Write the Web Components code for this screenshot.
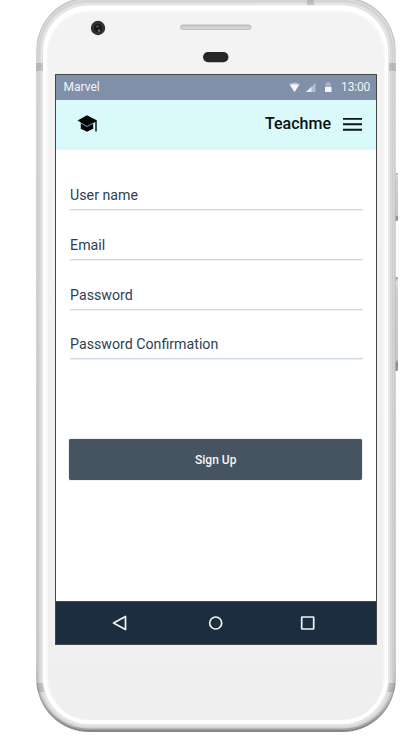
<!DOCTYPE html>
<html lang="en"><head><meta charset="utf-8"><title>Teachme</title>
<style>html,body{margin:0;background:#fff;overflow:hidden}body{font-family:Roboto,sans-serif;width:417px;height:738px}</style></head>
<body>
<sign-up-page></sign-up-page>
<script>
const define = (name, html) => customElements.define(name, class extends HTMLElement {
  constructor() {
    super();
    const t = document.createElement('template');
    t.innerHTML = html;
    this.attachShadow({mode: 'open'}).append(t.content.cloneNode(true));
  }
});

define('phone-shell', `<style>
:host{display:block;position:relative;width:417px;height:738px;overflow:hidden}
svg{position:absolute;left:0;top:0}
.screen{position:relative;box-sizing:border-box;width:322px;height:571px;margin:74px 0 0 55px;border:1px solid #464646;background:#fff;display:flex;flex-direction:column}
.wrap{display:flow-root}
</style>
<svg width="417" height="738" viewBox="0 0 417 738">
<defs>
<linearGradient id="edge" x2="0" y2="1"><stop offset="0" stop-color="#c8c8c8"/><stop offset=".9" stop-color="#b8b8b8"/><stop offset=".97" stop-color="#969696"/><stop offset="1" stop-color="#858585"/></linearGradient>
<linearGradient id="mid" x2="0" y2="1"><stop offset="0" stop-color="#dcdcdc"/><stop offset=".92" stop-color="#d0d0d0"/><stop offset="1" stop-color="#a2a2a2"/></linearGradient>
<linearGradient id="face" x2="0" y2="1"><stop offset="0" stop-color="#f3f3f3"/><stop offset="1" stop-color="#efefef"/></linearGradient>
<linearGradient id="btn" x2="0" y2="1"><stop offset="0" stop-color="#999"/><stop offset=".05" stop-color="#e0e0e0"/><stop offset=".12" stop-color="#d0d0d0"/><stop offset=".88" stop-color="#c5c5c5"/><stop offset=".92" stop-color="#888"/><stop offset="1" stop-color="#999"/></linearGradient>
<linearGradient id="spk" x2="0" y2="1"><stop offset="0" stop-color="#b4b4b4"/><stop offset=".35" stop-color="#cfcfcf"/><stop offset="1" stop-color="#dadada"/></linearGradient>
<clipPath id="rim"><path clip-rule="evenodd" d="M88-3H344A52 52 0 0 1 396 49V680A52 52 0 0 1 344 732H88A52 52 0 0 1 36 680V49A52 52 0 0 1 88-3ZM88 5A45 45 0 0 0 43 50V680A45 45 0 0 0 88 725H344A45 45 0 0 0 389 680V50A45 45 0 0 0 344 5Z"/></clipPath>
</defs>
<rect x="394" y="173" width="4" height="48" rx="1" fill="url(#btn)"/>
<rect x="394" y="277" width="4" height="94" rx="1" fill="url(#btn)"/>
<rect x="36.300" y="-3" width="359.400" height="735" rx="53" fill="url(#edge)"/>
<rect x="37.500" y="-1" width="357" height="731" rx="51" fill="url(#mid)"/>
<rect x="38.500" y=".5" width="354.500" height="728" rx="50" fill="#cecece"/>
<rect x="39.500" y="1.500" width="352.500" height="726" rx="49" fill="#d9d9d9"/>
<rect x="41" y="3" width="349" height="723" rx="47" fill="#e5e5e5"/>
<g clip-path="url(#rim)" fill="#777" opacity=".3"><rect x="307" y="-1" width="7" height="7"/><rect x="36" y="63" width="8" height="8"/><rect x="388" y="63" width="8" height="8"/><path d="M36 683h8l2 9H37.500ZM396 683h-8l-2 9h8.500Z"/></g>
<rect x="43" y="5.500" width="345" height="718.500" rx="46" fill="#fff"/>
<rect x="46.500" y="10.500" width="338.500" height="710" rx="43" fill="#f8f8f8"/>
<rect x="48" y="12" width="335.500" height="708" rx="42" fill="url(#face)"/>
<circle cx="98" cy="28" r="7.200" fill="#303132"/><circle cx="98" cy="28" r="3.900" fill="#151718"/><circle cx="97.500" cy="26.500" r="1.300" fill="#4f5554"/><circle cx="99" cy="30.700" r="1.100" fill="#7d8d3a"/>
<rect x="180.500" y="25" width="70.500" height="4.500" rx="2.250" fill="url(#spk)" stroke="#bdbdbd" stroke-width="1"/>
<rect x="203" y="52" width="25.500" height="10.200" rx="5.100" fill="#272727"/>
</svg>
<div class="wrap"><div class="screen"><slot></slot></div></div>`);

define('status-bar', `<style>
:host{display:flex;flex:none;height:25px;box-sizing:border-box;background:#8090a8;color:#f3f5f8;font-size:12px;line-height:25px;align-items:center;padding:0 6px 0 7.500px}
.carrier{flex:1}svg{flex:none;margin-right:8px}time{letter-spacing:-.2px}
</style><span class="carrier"><slot></slot></span>
<svg width="44" height="12" viewBox="0 0 44 12"><path d="M0 2Q5.500-1 11 2L5.500 10Z" fill="#b3bdcb"/><path d="M1 3Q5.500 1.500 10 3L5.500 10Z" fill="#f4f6f8"/><path d="M26.500 1V10H17Z" fill="#b3bdcb"/><path d="M22.500 4.800V10H17Z" fill="#e4e8ee"/><path d="M36.500 1h1.500V0h2.500v1h1.500V5.500h-5.500Z" fill="#a5b1c2"/><path d="M36 5h6.500v5H36Z" fill="#f4f6f8"/></svg>
<time>13:00</time>`);

define('app-header', `<style>
:host{display:flex;flex:none;height:50px;box-sizing:border-box;background:#d9f9fb;align-items:center;padding:0 14px 2px 20.500px;color:#0b0f10}
.cap{flex:none;margin-right:auto}h1{font-size:16px;font-weight:500;margin:0 12px 0 0;line-height:22px}
</style>
<svg class="cap" width="21" height="18" viewBox="0 0 21 18"><path d="M10 .3 19.700 5.300V16.500H18.300V7L10 11.200.5 5.500Z" fill="#050707"/><path d="M3.800 7v6.700l6.200 3 6.200-3V7L10 10.800Z" fill="#050707"/><path d="m3.800 8.200 6.200 3.300L16.200 8.200" fill="none" stroke="#a8c4c6" stroke-width=".8"/></svg>
<h1><slot></slot></h1>
<svg width="19" height="14" viewBox="0 0 19 14"><path d="M0 1.900h19M0 7.300h19M0 12.800h19" stroke="#111516" stroke-width="1.900"/></svg>`);

define('form-field', `<style>
:host{display:block;box-sizing:border-box;height:50px;color:#2f4054;font-size:14.200px;line-height:20px}
div{box-sizing:border-box;height:25px;border-bottom:1px solid #cdd9e6;box-shadow:0 1px 0 #edf1f6;padding-left:.6px}
</style><div><slot></slot></div>`);

define('submit-button', `<style>
:host{display:block;flex:none;height:41px;box-sizing:border-box}
button{display:block;width:293px;height:41px;border:0;border-radius:2px;background:#465461;color:#f5f6f7;font:500 12px Roboto,sans-serif;box-shadow:0 0 1px #465461;padding:1px 0 0}
</style><button><slot></slot></button>`);

define('nav-bar', `<style>
:host{display:flex;flex:none;height:43px;box-sizing:border-box;background:#1c2d3f;border-top:1px solid #3c4854;align-items:center;padding:0 0 0 56px}
svg{display:block;flex:none}
.home{margin:0 76px 0 80px}
path,circle,rect{fill:none;stroke:#f1f4f6;stroke-width:1.700;stroke-linejoin:round}
</style>
<svg width="16" height="16" viewBox="0 0 16 16"><path d="M1.500 8 13.500 1.500V14.500Z"/></svg>
<svg class="home" width="16" height="16" viewBox="0 0 16 16"><circle cx="7.700" cy="8" r="6"/></svg>
<svg width="16" height="16" viewBox="0 0 16 16"><rect x="1.700" y="2" width="12" height="12" rx=".5"/></svg>`);

define('sign-up-page', `<style>
:host{display:block}
main{flex:1;display:flex;flex-direction:column;padding:35px 13.500px 0 13.500px}
.fields{height:254px;flex:none}
form-field:nth-child(4){margin-top:-.7px}
submit-button{margin-left:-.3px}
</style>
<phone-shell>
<status-bar>Marvel</status-bar>
<app-header>Teachme</app-header>
<main><div class="fields"><form-field>User name</form-field><form-field>Email</form-field><form-field>Password</form-field><form-field>Password Confirmation</form-field></div>
<submit-button>Sign Up</submit-button></main>
<nav-bar></nav-bar>
</phone-shell>`);
</script></body></html>
